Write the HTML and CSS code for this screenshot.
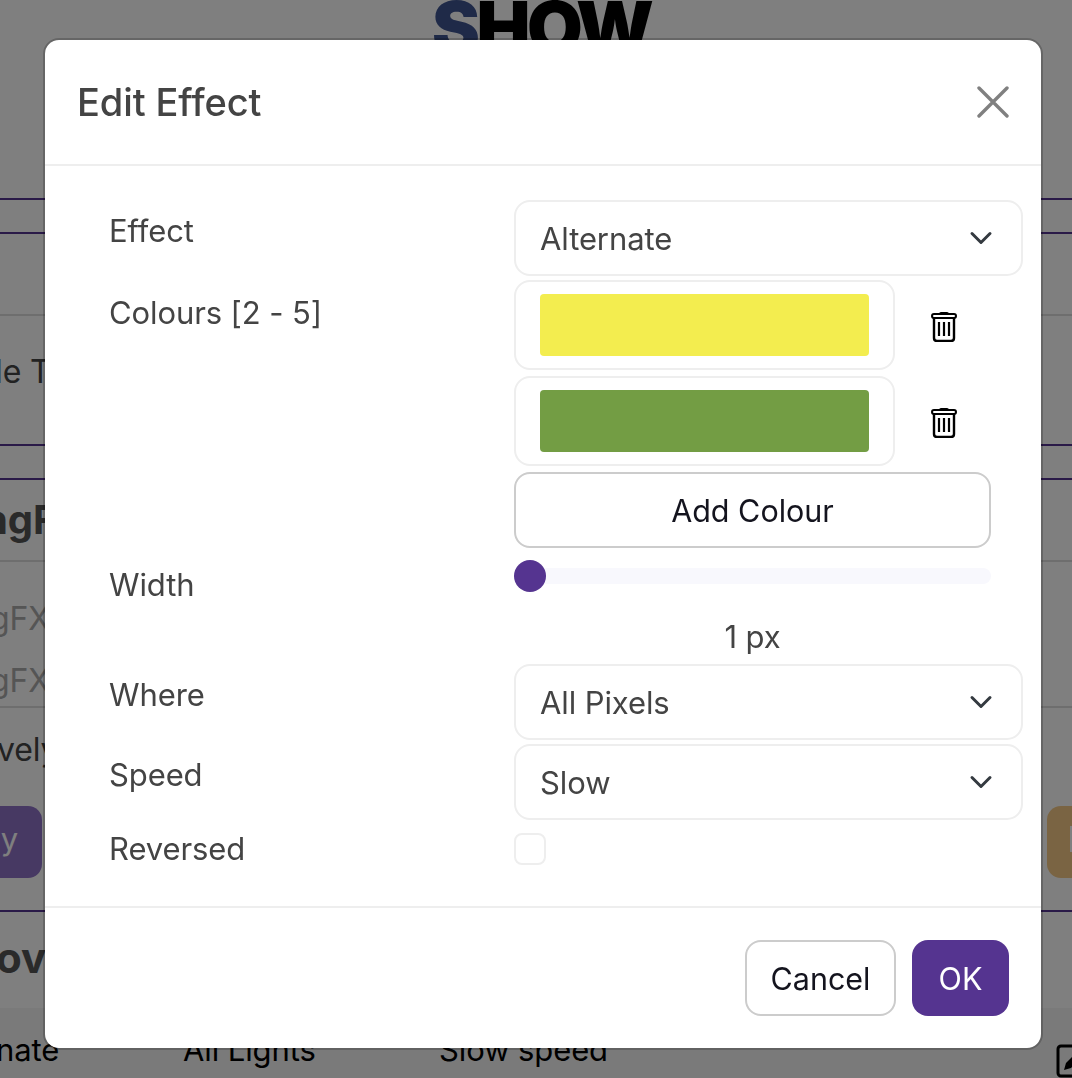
FILE: index.html
```html
<!DOCTYPE html>
<html lang="en">

<head>
  <meta charset="UTF-8">
  <title>Edit Effect</title>
  <link rel="stylesheet" href="styles.css">
</head>

<body>
  <div class="page">
    <div class="logo"><span class="logo-s">S</span>HOW</div>
    <div class="band band-a"></div>
    <div class="band band-b"></div>
    <div class="band band-c"><span class="cut-text">le T</span></div>
    <div class="band band-d"></div>
    <div class="band band-e"><span class="cut-heading">ngF</span></div>
    <div class="band band-f">
      <span class="cut-muted">gFX</span>
      <span class="cut-muted">gFX</span>
    </div>
    <div class="band band-g">
      <span class="cut-text cut-vely">vely</span>
      <div class="page-buttons">
        <span class="page-btn page-btn-purple">y</span>
        <span class="page-btn page-btn-tan"><span class="tan-mark"></span></span>
      </div>
    </div>
    <div class="band band-h"><span class="cut-heading cut-ov">ov</span></div>
    <div class="table-row">
      <span class="cell cell-1">nate</span>
      <span class="cell cell-2">All Lights</span>
      <span class="cell cell-3">Slow speed</span>
      <svg class="edit-icon" width="34" height="34" viewBox="0 0 34 34">
        <rect x="2" y="2" width="30" height="30" rx="3" fill="none" stroke="#000" stroke-width="3" />
        <path d="M8 26l2-7L22 7l5 5-12 12z" fill="#000" />
      </svg>
    </div>
  </div>

  <div class="backdrop"></div>

  <div class="modal">
    <div class="modal-header">
      <h1 class="modal-title">Edit Effect</h1>
      <button class="close-btn" aria-label="Close">
        <svg width="32" height="32" viewBox="0 0 32 32">
          <path d="M2 2l28 28M30 2L2 30" stroke="#808080" stroke-width="3.4" stroke-linecap="round" />
        </svg>
      </button>
    </div>

    <div class="modal-body">
      <div class="form-row">
        <label class="form-label">Effect</label>
        <div class="select-box">
          <span>Alternate</span>
          <svg class="chevron" width="24" height="14" viewBox="0 0 24 14">
            <path d="M3 2.500l9 9 9-9" fill="none" stroke="#343a40" stroke-width="3" stroke-linecap="round" stroke-linejoin="round" />
          </svg>
        </div>
      </div>

      <div class="form-row">
        <label class="form-label form-label-low">Colours [2 - 5]</label>
        <div class="colour-list">
          <div class="colour-row">
            <div class="colour-box"><div class="swatch swatch-yellow"></div></div>
            <svg class="trash" width="26" height="31" viewBox="0 0 26 31">
              <path d="M8 3c0-1.200 1-2 2-2h6c1 0 2 .8 2 2z" fill="#000" />
              <rect x="1" y="3" width="24" height="4" rx="2" fill="none" stroke="#000" stroke-width="2" />
              <path d="M3 7v20c0 2 1 3 3 3h14c2 0 3-1 3-3V7" fill="none" stroke="#000" stroke-width="2.400" />
              <path d="M8 11v14M13 11v14M18 11v14" stroke="#000" stroke-width="2.200" />
            </svg>
          </div>
          <div class="colour-row">
            <div class="colour-box"><div class="swatch swatch-green"></div></div>
            <svg class="trash" width="26" height="31" viewBox="0 0 26 31">
              <path d="M8 3c0-1.200 1-2 2-2h6c1 0 2 .8 2 2z" fill="#000" />
              <rect x="1" y="3" width="24" height="4" rx="2" fill="none" stroke="#000" stroke-width="2" />
              <path d="M3 7v20c0 2 1 3 3 3h14c2 0 3-1 3-3V7" fill="none" stroke="#000" stroke-width="2.400" />
              <path d="M8 11v14M13 11v14M18 11v14" stroke="#000" stroke-width="2.200" />
            </svg>
          </div>
          <button class="btn btn-outline btn-add">Add Colour</button>
        </div>
      </div>

      <div class="form-row">
        <label class="form-label form-label-low">Width</label>
        <div class="slider-wrap">
          <input class="slider" type="range" min="1" max="20" value="1">
          <div class="slider-value">1 px</div>
        </div>
      </div>

      <div class="form-row">
        <label class="form-label">Where</label>
        <div class="select-box">
          <span>All Pixels</span>
          <svg class="chevron" width="24" height="14" viewBox="0 0 24 14">
            <path d="M3 2.500l9 9 9-9" fill="none" stroke="#343a40" stroke-width="3" stroke-linecap="round" stroke-linejoin="round" />
          </svg>
        </div>
      </div>

      <div class="form-row">
        <label class="form-label">Speed</label>
        <div class="select-box">
          <span>Slow</span>
          <svg class="chevron" width="24" height="14" viewBox="0 0 24 14">
            <path d="M3 2.500l9 9 9-9" fill="none" stroke="#343a40" stroke-width="3" stroke-linecap="round" stroke-linejoin="round" />
          </svg>
        </div>
      </div>

      <div class="form-row form-row-check">
        <label class="form-label form-label-check">Reversed</label>
        <input class="check" type="checkbox">
      </div>
    </div>

    <div class="modal-footer">
      <button class="btn btn-outline btn-cancel">Cancel</button>
      <button class="btn btn-primary">OK</button>
    </div>
  </div>
</body>

</html>
```

FILE: styles.css
```css
:root {
  --purple: #553490;
  --border-light: #eeeeee;
  --border-button: #cccccc;
  --text-color: #444444;
  --text-dark: #14141e;
}

* {
  box-sizing: border-box;
}

html,
body {
  margin: 0;
  height: 1078px;
  overflow: hidden;
}

body {
  font-family: Inter, "Liberation Sans", sans-serif;
  font-size: 31px;
  letter-spacing: -0.1px;
  color: var(--text-color);
  background-color: #fff;
}

/* page behind the dialog */
.page {
  height: 1078px;
  overflow: hidden;
}

.logo {
  height: 198px;
  padding-left: 432px;
  font-size: 72px;
  font-weight: 900;
  line-height: 54px;
  letter-spacing: -3.5px;
  color: #000;
}

.logo-s {
  color: #3f5591;
}

.band {
  border-bottom: 2px solid #dddddd;
}

.band-a {
  height: 36px;
  border-top: 2px solid var(--purple);
  border-bottom: 2px solid var(--purple);
}

.band-b {
  height: 82px;
}

.band-c {
  height: 130px;
  padding-top: 36px;
  border-bottom: 2px solid var(--purple);
}

.band-d {
  height: 34px;
  border-bottom: 2px solid var(--purple);
}

.band-e {
  height: 82px;
  padding-top: 16px;
}

.band-f {
  height: 146px;
  display: flex;
  flex-direction: column;
  padding-top: 37px;
  gap: 22px;
}

.band-g {
  height: 204px;
  border-bottom: 2px solid var(--purple);
  padding-top: 22px;
}

.band-h {
  height: 96px;
  border-bottom: 0;
  padding-top: 22px;
}

.cut-text {
  display: block;
  margin-left: -5px;
  font-size: 32px;
  line-height: 40px;
}

.cut-vely {
  margin-left: -3px;
}

.cut-heading {
  display: block;
  margin-left: -17px;
  font-size: 40px;
  font-weight: 700;
  line-height: 48px;
  color: #555;
}

.cut-ov {
  margin-left: -4px;
  font-size: 42px;
}

.cut-muted {
  display: block;
  margin-left: -10px;
  font-size: 32px;
  line-height: 40px;
  color: #aaa;
}

.page-buttons {
  display: flex;
  justify-content: space-between;
  margin-top: 36px;
}

.page-btn {
  height: 72px;
  padding-top: 14px;
  color: #fff;
}

.page-btn-purple {
  width: 42px;
  padding-right: 24px;
  text-align: right;
  border-radius: 0 14px 14px 0;
  background-color: #8f73c7;
}

.page-btn-tan {
  width: 25px;
  padding-left: 23px;
  border-radius: 14px 0 0 14px;
  background-color: #f4c986;
}

.tan-mark {
  display: block;
  width: 2px;
  height: 26px;
  margin-top: 6px;
  background-color: #fff;
}

.table-row {
  height: 70px;
  padding-top: 22px;
  display: flex;
  font-size: 31px;
  line-height: 40px;
  white-space: nowrap;
  color: #000;
  background-color: #f5f5f5;
}

.cell-1 {
  flex: 0 0 187px;
  margin-left: -4px;
}

.cell-2 {
  flex: 0 0 256px;
}

.cell-3 {
  flex: 0 0 617px;
}

.edit-icon {
  flex-shrink: 0;
  margin-top: 14px;
}

.backdrop {
  position: fixed;
  inset: 0;
  background-color: rgba(0, 0, 0, 0.5);
}

/* dialog */
.modal {
  position: fixed;
  left: 43px;
  top: 38px;
  width: 1000px;
  height: 1012px;
  display: flex;
  flex-direction: column;
  background-color: #fff;
  background-clip: padding-box;
  border: 2px solid rgba(0, 0, 0, 0.2);
  border-radius: 16px;
}

.modal-header {
  height: 126px;
  display: flex;
  align-items: center;
  justify-content: space-between;
  padding: 0 32px;
  border-bottom: 2px solid var(--border-light);
}

.modal-title {
  margin: 0;
  font-size: 38px;
  font-weight: 500;
  line-height: 44px;
  letter-spacing: -0.1px;
  color: var(--text-color);
}

.close-btn {
  display: flex;
  padding: 0;
  border: none;
  background: none;
}

.modal-body {
  height: 740px;
  padding: 34px 18px 0 64px;
  display: flex;
  flex-direction: column;
  gap: 4px;
}

.form-row {
  display: flex;
}

.form-label {
  flex: 0 0 405px;
  padding-top: 11px;
  line-height: 40px;
}

.form-label-low {
  padding-top: 13px;
}

.select-box {
  width: 509px;
  height: 76px;
  display: flex;
  align-items: center;
  justify-content: space-between;
  padding: 0 28px 0 24px;
  border: 2px solid var(--border-light);
  border-radius: 16px;
}

.chevron {
  margin-top: -1px;
}

.colour-list {
  width: 477px;
  display: flex;
  flex-direction: column;
  gap: 6px;
}

.colour-row {
  display: flex;
  align-items: center;
  gap: 36px;
}

.colour-box {
  width: 381px;
  height: 90px;
  padding: 12px 24px;
  border: 2px solid var(--border-light);
  border-radius: 16px;
}

.swatch {
  height: 62px;
  border-radius: 4px;
}

.swatch-yellow {
  background-color: #f3ed4f;
}

.swatch-green {
  background-color: #739d44;
}

.trash {
  margin-top: 3px;
}

.btn {
  height: 76px;
  border-radius: 16px;
  font-family: inherit;
  font-size: 30.5px;
}

.btn-outline {
  border: 2px solid var(--border-button);
  background-color: #fff;
  color: var(--text-dark);
}

.btn-primary {
  width: 97px;
  border: none;
  background-color: var(--purple);
  color: #fff;
}

.btn-cancel {
  width: 151px;
}

.slider-wrap {
  width: 477px;
  padding-top: 8px;
}

.slider {
  display: block;
  width: 100%;
  height: 32px;
  margin: 0;
  background: none;
  -webkit-appearance: none;
  appearance: none;
}

.slider::-webkit-slider-runnable-track {
  height: 16px;
  border-radius: 8px;
  background-color: #f8f8fd;
}

.slider::-webkit-slider-thumb {
  -webkit-appearance: none;
  width: 32px;
  height: 32px;
  margin-top: -8px;
  border-radius: 50%;
  background-color: var(--purple);
}

.slider-value {
  margin-top: 25px;
  height: 43px;
  line-height: 40px;
  text-align: center;
}

.form-row-check {
  align-items: center;
  margin-top: 4px;
}

.form-label-check {
  padding-top: 1px;
}

.check {
  width: 32px;
  height: 32px;
  margin: 0;
  border: 2px solid var(--border-light);
  border-radius: 8px;
  background-color: #fff;
  -webkit-appearance: none;
  appearance: none;
}

.modal-footer {
  flex: 1;
  display: flex;
  align-items: center;
  justify-content: flex-end;
  gap: 16px;
  padding-right: 32px;
  border-top: 2px solid var(--border-light);
}
```
